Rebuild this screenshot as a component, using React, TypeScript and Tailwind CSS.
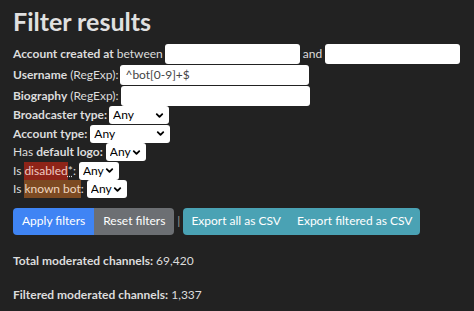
import { ChevronDown } from 'lucide-react';

function Select({ width }: { width: string }) {
  return (
    <span className={`relative inline-flex shrink-0 items-center ${width}`}>
      <select className="h-[18px] w-full appearance-none rounded-[3px] bg-white pl-[4px] text-[12px] leading-none text-black outline-none">
        <option>Any</option>
      </select>
      <ChevronDown className="pointer-events-none absolute right-[4px] h-[11px] w-[11px] text-black" strokeWidth={4} />
    </span>
  );
}

function TextInput({ width, value }: { width: string; value?: string }) {
  return (
    <input
      type="text"
      readOnly
      value={value ?? ''}
      className={`h-[20px] shrink-0 rounded-[3px] bg-white px-[5px] text-[12px] text-[#444] outline-none ${width}`}
    />
  );
}

export default function App() {
  return (
    <div
      className="min-h-[311px] w-[474px] overflow-hidden whitespace-nowrap bg-[#222222] px-[13px] pt-[4px] text-[12px] text-[#dcdcdc]"
      style={{ fontFamily: 'Lato, "Open Sans", sans-serif' }}
    >
      <h1 className="mb-[5px] text-[25px] font-bold leading-[34px] text-[#e0e0e0]">Filter results</h1>

      <div className="flex flex-col">
        <div className="flex h-[21px] items-center">
          <b className="font-bold">Account created at</b>
          <span className="ml-[3px]">between</span>
          <TextInput width="ml-[2px] w-[135px]" />
          <span className="mx-[3px]">and</span>
          <TextInput width="w-[135px]" />
        </div>
        <div className="flex h-[21px] items-center">
          <b className="font-bold">Username</b>
          <span className="ml-[3px]">(RegExp):</span>
          <TextInput width="ml-[2px] w-[189px]" value="^bot[0-9]+$" />
        </div>
        <div className="flex h-[21px] items-center">
          <b className="font-bold">Biography</b>
          <span className="ml-[3px]">(RegExp):</span>
          <TextInput width="ml-[2px] w-[189px]" />
        </div>
        <div className="flex h-[18.5px] items-center">
          <b className="font-bold">Broadcaster type:</b>
          <Select width="ml-[2px] w-[60px]" />
        </div>
        <div className="flex h-[18.5px] items-center">
          <b className="font-bold">Account type:</b>
          <Select width="ml-[3px] w-[80px]" />
        </div>
        <div className="flex h-[18.5px] items-center">
          <span>Has</span>
          <b className="ml-[3px] font-bold">default logo:</b>
          <Select width="ml-[3px] w-[40px]" />
        </div>
        <div className="flex h-[18.5px] items-center">
          <span>Is</span>
          <span className="ml-[3px] bg-[#8e2418] text-[#f0c8c0]">disabled</span>
          <abbr className="underline decoration-dotted">*</abbr>
          <span>:</span>
          <Select width="ml-[3px] w-[40px]" />
        </div>
        <div className="flex h-[18.5px] items-center">
          <span>Is</span>
          <span className="ml-[3px] bg-[#7c4a22] text-[#f0d8c0]">known bot</span>
          <span>:</span>
          <Select width="ml-[3px] w-[40px]" />
        </div>
      </div>

      <div className="mt-[9px] flex items-center text-[12px]">
        <div className="flex overflow-hidden rounded-[4px]">
          <button className="h-[27px] bg-[#3f84f4] px-[9px] text-white">Apply filters</button>
          <button className="h-[27px] bg-[#6c6f73] px-[9px] text-white">Reset filters</button>
        </div>
        <span className="mx-[3px] text-[#9a9a9a]">|</span>
        <div className="flex overflow-hidden rounded-[4px] bg-[#4aa2b4]">
          <button className="h-[27px] px-[8px] text-white">Export all as CSV</button>
          <button className="h-[27px] px-[8px] text-white">Export filtered as CSV</button>
        </div>
      </div>

      <p className="mt-[17px] leading-[18px]">
        <b className="font-bold">Total moderated channels:</b> 69,420
      </p>
      <p className="mt-[16px] leading-[18px]">
        <b className="font-bold">Filtered moderated channels:</b> 1,337
      </p>
    </div>
  );
}
